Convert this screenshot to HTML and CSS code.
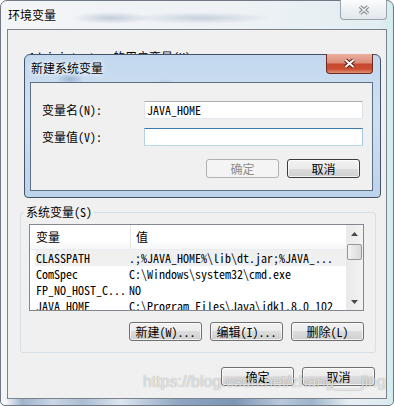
FILE: index.html
```html
<!DOCTYPE html>
<html lang="zh-CN">
<head>
  <meta charset="UTF-8">
  <title>环境变量</title>
  <link rel="stylesheet" href="styles.css">
</head>
<body>
  <div class="window">
    <div class="titlebar">
      <span class="title">环境变量</span>
      <span class="close inactive">
        <svg width="12" height="10" viewBox="0 0 12 10"><path d="M2 1.5L10 8.5M10 1.5L2 8.5" stroke="#7b8087" stroke-width="3.6"/><path d="M2 1.5L10 8.5M10 1.5L2 8.5" stroke="#f2f3f4" stroke-width="1.6"/></svg>
      </span>
    </div>

    <div class="client">
      <div class="user-area">
        <div class="user-label">Administrator 的用户变量(U)</div>
      </div>

      <fieldset class="group">
        <legend>系统变量(S)</legend>
        <div class="listview">
          <div class="lv-main">
            <div class="lv-head">
              <span class="h1">变量</span>
              <span class="h2">值</span>
            </div>
            <div class="lv-row sel"><span class="c1">CLASSPATH</span><span class="c2">.;%JAVA_HOME%\lib\dt.jar;%JAVA_...</span></div>
            <div class="lv-row"><span class="c1">ComSpec</span><span class="c2">C:\Windows\system32\cmd.exe</span></div>
            <div class="lv-row"><span class="c1">FP_NO_HOST_C...</span><span class="c2">NO</span></div>
            <div class="lv-row"><span class="c1">JAVA_HOME</span><span class="c2">C:\Program Files\Java\jdk1.8.0_102</span></div>
          </div>
          <div class="scrollbar">
            <div class="sb-btn"><svg width="7" height="4" viewBox="0 0 7 4"><path d="M0 4L3.5 0L7 4Z" fill="#4a4a4a"/></svg></div>
            <div class="sb-thumb"></div>
            <div class="sb-btn down"><svg width="7" height="4" viewBox="0 0 7 4"><path d="M0 0L3.5 4L7 0Z" fill="#4a4a4a"/></svg></div>
          </div>
        </div>
        <div class="btn-row">
          <span class="btn">新建(W)...</span>
          <span class="btn">编辑(I)...</span>
          <span class="btn">删除(L)</span>
        </div>
      </fieldset>

      <div class="btn-row footer">
        <span class="btn">确定</span>
        <span class="btn">取消</span>
      </div>
    </div>
    <div class="frame-bottom"></div>

    <!-- modal on top of the main window -->
    <div class="dialog">
      <div class="dlg-titlebar">
        <span class="title">新建系统变量</span>
        <span class="close active">
          <svg width="13" height="11" viewBox="0 0 13 11"><path d="M2.5 2L10.5 9M10.5 2L2.5 9" stroke="#5a1b10" stroke-width="4"/><path d="M2.5 2L10.5 9M10.5 2L2.5 9" stroke="#ffffff" stroke-width="2"/></svg>
        </span>
      </div>
      <div class="dlg-client">
        <div class="field">
          <span class="label">变量名(N):</span>
          <span class="input">JAVA_HOME</span>
        </div>
        <div class="field">
          <span class="label">变量值(V):</span>
          <span class="input focus"></span>
        </div>
        <div class="btn-row dlg-btns">
          <span class="btn disabled">确定</span>
          <span class="btn default">取消</span>
        </div>
      </div>
    </div>

    <div class="watermark">https://blog.csdn.net/zhang___jing</div>
  </div>
</body>
</html>
```

FILE: styles.css
```css
* {
  box-sizing: border-box;
}

body {
  margin: 0;
  width: 394px;
  height: 406px;
  overflow: hidden;
  background: #ffffff;
  font-family: "Noto Sans Mono CJK SC", "Noto Sans CJK SC", monospace;
  font-size: 12px;
  line-height: 12px;
  color: #000;
}

/* outer window (inactive aero frame) */
.window {
  position: relative;
  width: 394px;
  height: 406px;
  border: 1px solid #6f7883;
  border-radius: 7px 7px 5px 5px;
  padding: 0 6px;
  display: flex;
  flex-direction: column;
  background:
    radial-gradient(ellipse 40px 6px at 110px 17px, rgba(110, 130, 165, .35), transparent),
    radial-gradient(ellipse 70px 6px at 200px 17px, rgba(110, 130, 165, .3), transparent),
    linear-gradient(90deg, #f3f5f7 0, #eef2f5 60%, #e2eef2 96%, #d3ecf0 100%);
}

.titlebar {
  height: 28px;
  display: flex;
  align-items: flex-start;
}

.title {
  margin-top: 8px;
  padding-left: 1px;
  text-shadow: 0 0 4px #fff, 0 0 6px #fff;
}

.close {
  margin-left: auto;
  width: 47px;
  display: flex;
  align-items: center;
  justify-content: center;
  border-radius: 0 0 4px 4px;
}

.close.inactive {
  margin-top: -1px;
  height: 20px;
  border: 1px solid #9aa3ad;
  border-top: none;
  background: linear-gradient(#fbfcfd, #eef1f4 50%, #e3e7eb);
}

.client {
  flex: 1;
  border: 1px solid #7b828b;
  background: #f0f0f0;
  display: flex;
  flex-direction: column;
}

.user-area {
  height: 176px;
  padding: 21px 0 0 21px;
}

.group {
  margin: 0 10px 0 12px;
  padding: 6px 11px 11px 8px;
  border: 1px solid #d5dfe5;
  border-radius: 3px;
  min-width: 0;
}

.group legend {
  margin-left: -5px;
  padding: 0 2px;
  line-height: 12px;
}

.listview {
  width: 335px;
  height: 87px;
  border: 1px solid #828790;
  background: #fff;
  display: flex;
}

.lv-main {
  flex: 1;
  overflow: hidden;
}

.lv-head {
  height: 25px;
  display: flex;
  align-items: center;
  border-bottom: 1px solid #e8ebef;
  background: linear-gradient(#ffffff 0, #ffffff 60%, #f6f7f9 100%);
}

.h1 {
  width: 101px;
  height: 100%;
  padding-left: 6px;
  display: flex;
  align-items: center;
  border-right: 1px solid #e5e5e5;
}

.h2 {
  padding-left: 5px;
}

.lv-row {
  height: 16px;
  margin-left: 5px;
  display: flex;
  align-items: center;
  white-space: nowrap;
}

.lv-row.sel {
  background: #f0f0f0;
}

.c1 {
  width: 94px;
  padding-left: 1px;
}

.scrollbar {
  width: 17px;
  display: flex;
  flex-direction: column;
  background: linear-gradient(90deg, #e9e9e9, #f3f3f3);
}

.sb-btn {
  height: 17px;
  display: flex;
  align-items: center;
  justify-content: center;
}

.sb-btn.down {
  margin-top: auto;
}

.sb-thumb {
  height: 16px;
  margin: 2px 1px 0;
  border: 1px solid #979797;
  border-radius: 2px;
  background: linear-gradient(90deg, #f3f3f3, #e6e6e6 50%, #d9d9d9);
}

.btn-row {
  display: flex;
  justify-content: flex-end;
  gap: 8px;
  margin-top: 11px;
}

.btn {
  width: 73px;
  height: 19px;
  border: 1px solid #707070;
  border-radius: 3px;
  background: linear-gradient(#f2f2f2 0, #ebebeb 50%, #dddddd 50%, #cfcfcf 100%);
  box-shadow: inset 0 0 0 1px rgba(255, 255, 255, .7);
  display: flex;
  align-items: center;
  justify-content: center;
  white-space: nowrap;
}

.btn.disabled {
  border-color: #adb2b5;
  background: #f4f4f4;
  color: #8c8c8c;
  box-shadow: none;
}

.btn.default {
  border-color: #3c3c3c;
}

.footer {
  margin-top: 14px;
  padding-right: 11px;
}

.frame-bottom {
  height: 6px;
  background: linear-gradient(90deg, #eef2f5 0, #9fb3cb 4%, #c9d6e4 12%, #a9bdd3 20%, #dce6ef 30%, #8ea6c3 45%, #7d95b5 60%, #b9c9da 72%, #9db3cc 80%, #e7eef3 90%, #dcebf0 100%);
}

/* modal dialog (active aero frame) */
.dialog {
  position: absolute;
  left: 23px;
  top: 53px;
  width: 357px;
  height: 144px;
  border: 1px solid #42536a;
  border-radius: 6px 6px 4px 4px;
  padding: 0 7px 6px 5px;
  display: flex;
  flex-direction: column;
  background:
    radial-gradient(ellipse 14px 6px at 45px 24px, rgba(80, 110, 150, .35), transparent),
    radial-gradient(ellipse 10px 6px at 140px 30px, rgba(80, 110, 150, .3), transparent),
    linear-gradient(#c3d8ee 0, #cfe0f2 40%, #bcd3ec 100%);
}

.dlg-titlebar {
  height: 27px;
  display: flex;
  align-items: flex-start;
}

.dlg-titlebar .title {
  margin-top: 7px;
}

.close.active {
  margin-top: -1px;
  height: 20px;
  border: 1px solid #6e2a1d;
  border-top: none;
  background: linear-gradient(#eab0a2 0, #dd8d79 45%, #c6472d 55%, #cb4f34 80%, #e19479 100%);
}

.dlg-client {
  flex: 1;
  border: 1px solid #5d6f85;
  background: #f0f0f0;
  padding: 18px 9px 12px 11px;
}

.field {
  height: 18px;
  display: flex;
  align-items: center;
}

.field + .field {
  margin-top: 9px;
}

.label {
  width: 102px;
}

.input {
  width: 219px;
  height: 18px;
  padding-left: 2px;
  display: flex;
  align-items: center;
  background: #fff;
  border: 1px solid;
  border-color: #abadb3 #dbdfe6 #e3e9ef #e2e3ea;
}

.input.focus {
  border-color: #3d7bad #a4c9e3 #b7d9ed #b5cfe7;
}

.dlg-btns {
  margin-top: 13px;
  padding-right: 3px;
}

.watermark {
  position: absolute;
  left: 142px;
  top: 372px;
  font-family: "Liberation Sans", Arial, sans-serif;
  font-size: 16px;
  line-height: 18px;
  color: rgba(255, 255, 255, .75);
  text-shadow: 0 0 1px rgba(0, 0, 0, .45);
  white-space: nowrap;
}
```
